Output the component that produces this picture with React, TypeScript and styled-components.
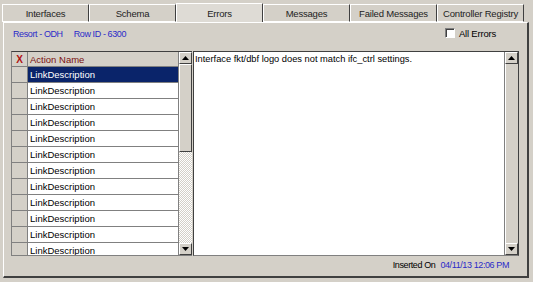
import React from 'react'
import styled, { createGlobalStyle } from 'styled-components'

const GlobalStyle = createGlobalStyle`
    body {
        margin: 0;
        background: #d4d0c8;
        font-family: "Liberation Sans", Arial, sans-serif;
        font-size: 9.5px;
    }
`

const tabs = ['Interfaces', 'Schema', 'Errors', 'Messages', 'Failed Messages', 'Controller Registry']
const ROWS = 12

const ArrowUp = () => (
    <svg width="7" height="4" viewBox="0 0 7 4">
        <path d="M3.5 0 L7 4 L0 4 Z" fill="#000" />
    </svg>
)

const ArrowDown = () => (
    <svg width="7" height="4" viewBox="0 0 7 4">
        <path d="M0 0 L7 0 L3.5 4 Z" fill="#000" />
    </svg>
)

export default function App() {
    return (
        <Window>
            <GlobalStyle />
            <TabBar>
                {tabs.map((t) => (
                    <Tab key={t} active={t === 'Errors'}>{t}</Tab>
                ))}
            </TabBar>
            <Panel>
                <InfoRow>
                    <InfoLink>Resort - ODH</InfoLink>
                    <InfoLink>Row ID - 6300</InfoLink>
                    <Spacer />
                    <CheckLabel>
                        <CheckBox />
                        All Errors
                    </CheckLabel>
                </InfoRow>
                <Body>
                    <Grid>
                        <GridTable>
                            <HeaderRow>
                                <RowHead><DelMark>X</DelMark></RowHead>
                                <HeaderCell>Action Name</HeaderCell>
                            </HeaderRow>
                            {Array.from({ length: ROWS }).map((_, i) => (
                                <Row key={i}>
                                    <RowHead />
                                    <Cell selected={i === 0}>LinkDescription</Cell>
                                </Row>
                            ))}
                        </GridTable>
                        <ScrollBar>
                            <ScrollButton><ArrowUp /></ScrollButton>
                            <Thumb style={{ height: 88 }} />
                            <Track />
                            <ScrollButton><ArrowDown /></ScrollButton>
                        </ScrollBar>
                    </Grid>
                    <MessageBox>
                        <MessageText>Interface fkt/dbf logo does not match ifc_ctrl settings.</MessageText>
                        <ScrollBar>
                            <ScrollButton><ArrowUp /></ScrollButton>
                            <PlainTrack />
                            <ScrollButton><ArrowDown /></ScrollButton>
                        </ScrollBar>
                    </MessageBox>
                </Body>
                <Footer>
                    <span>Inserted On</span>
                    <DateText>04/11/13 12:06 PM</DateText>
                </Footer>
            </Panel>
        </Window>
    )
}

const Window = styled.div`
    width: 533px;
    height: 282px;
    box-sizing: border-box;
    padding-top: 3px;
    background: #d4d0c8;
    display: flex;
    flex-direction: column;
    overflow: hidden;
`

const TabBar = styled.div`
    display: flex;
    margin-left: 2px;
    width: 522px;
    height: 19px;
    align-items: flex-end;
`

const Tab = styled.div<{ active?: boolean }>`
    flex: 1;
    height: ${(p) => (p.active ? '19px' : '18px')};
    box-sizing: border-box;
    display: flex;
    align-items: center;
    justify-content: center;
    background: ${(p) => (p.active ? '#dedbd5' : '#d4d0c8')};
    border-top: 1px solid #fff;
    border-left: 1px solid #fff;
    border-right: 1px solid #404040;
    border-bottom: ${(p) => (p.active ? 'none' : '1px solid #fff')};
    color: #222;
    font-size: 9.5px;
    letter-spacing: -0.2px;
    white-space: nowrap;
`

const Panel = styled.div`
    margin-left: 3px;
    width: 526px;
    height: 256px;
    box-sizing: border-box;
    border-top: 1px solid #fff;
    border-left: 1px solid #fff;
    border-right: 2px solid #404040;
    border-bottom: 2px solid #404040;
    padding: 0 8px 0 7px;
    display: flex;
    flex-direction: column;
`

const InfoRow = styled.div`
    height: 22px;
    margin-bottom: 6px;
    display: flex;
    align-items: center;
    gap: 11px;
    padding-left: 2px;
    font-size: 9px;
    letter-spacing: -0.4px;
`

const InfoLink = styled.span`
    color: #2b2bc8;
`

const Spacer = styled.div`
    flex: 1;
`

const CheckLabel = styled.label`
    display: flex;
    align-items: center;
    gap: 4px;
    margin-right: 23px;
    margin-top: -2px;
    color: #000;
    font-size: 9.5px;
    letter-spacing: -0.2px;
`

const CheckBox = styled.span`
    width: 8px;
    height: 8px;
    background: #fff;
    border-top: 1px solid #808080;
    border-left: 1px solid #808080;
    border-right: 1px solid #fff;
    border-bottom: 1px solid #fff;
    box-shadow: inset 1px 1px 0 #404040;
`

const Body = styled.div`
    display: flex;
    height: 205px;
`

const Grid = styled.div`
    width: 181px;
    display: flex;
    box-sizing: border-box;
    border-top: 1px solid #404040;
    border-left: 1px solid #808080;
    border-bottom: 1px solid #808080;
    overflow: hidden;
`

const GridTable = styled.div`
    flex: 1;
    display: flex;
    flex-direction: column;
    overflow: hidden;
    background: #d4d0c8;
`

const HeaderRow = styled.div`
    display: flex;
    height: 14px;
    flex-shrink: 0;
    border-bottom: 1px solid #808080;
`

const Row = styled.div`
    display: flex;
    height: 16px;
    flex-shrink: 0;
    box-sizing: border-box;
    border-bottom: 1px solid #808080;
`

const RowHead = styled.div`
    width: 16px;
    flex-shrink: 0;
    box-sizing: border-box;
    border-right: 1px solid #808080;
    background: #d4d0c8;
    display: flex;
    align-items: center;
    justify-content: center;
`

const DelMark = styled.span`
    color: #b01010;
    font-weight: bold;
    font-size: 10px;
`

const HeaderCell = styled.div`
    flex: 1;
    display: flex;
    align-items: center;
    padding-left: 2px;
    color: #7a1010;
    background: #d4d0c8;
`

const Cell = styled.div<{ selected?: boolean }>`
    flex: 1;
    display: flex;
    align-items: center;
    padding-left: 2px;
    background: ${(p) => (p.selected ? '#0a246a' : '#fff')};
    color: ${(p) => (p.selected ? '#fff' : '#000')};
`

const ScrollBar = styled.div`
    width: 13px;
    flex-shrink: 0;
    display: flex;
    flex-direction: column;
    border-left: 1px solid #808080;
`

const ScrollButton = styled.div`
    height: 12px;
    flex-shrink: 0;
    box-sizing: border-box;
    background: #d4d0c8;
    border-top: 1px solid #fff;
    border-left: 1px solid #fff;
    border-right: 1px solid #404040;
    border-bottom: 1px solid #404040;
    display: flex;
    align-items: center;
    justify-content: center;
`

const Thumb = styled.div`
    flex-shrink: 0;
    box-sizing: border-box;
    background: #d4d0c8;
    border-top: 1px solid #fff;
    border-left: 1px solid #fff;
    border-right: 1px solid #404040;
    border-bottom: 1px solid #404040;
`

const Track = styled.div`
    flex: 1;
    background: repeating-conic-gradient(#fff 0 25%, #d4d0c8 0 50%) 0 0 / 2px 2px;
`

const PlainTrack = styled.div`
    flex: 1;
    background: #d4d0c8;
    border-left: 1px solid #fff;
`

const MessageBox = styled.div`
    flex: 1;
    margin-left: 1px;
    display: flex;
    box-sizing: border-box;
    background: #fff;
    border-top: 1px solid #404040;
    border-left: 1px solid #404040;
    border-right: 1px solid #404040;
    border-bottom: 1px solid #808080;
`

const MessageText = styled.div`
    flex: 1;
    padding: 2px 0 0 1px;
    color: #000;
    font-size: 9.3px;
`

const Footer = styled.div`
    height: 18px;
    display: flex;
    align-items: center;
    justify-content: flex-end;
    gap: 5px;
    padding-right: 10px;
    color: #000;
    font-size: 9px;
    letter-spacing: -0.4px;
`

const DateText = styled.span`
    color: #2b2bc8;
`
